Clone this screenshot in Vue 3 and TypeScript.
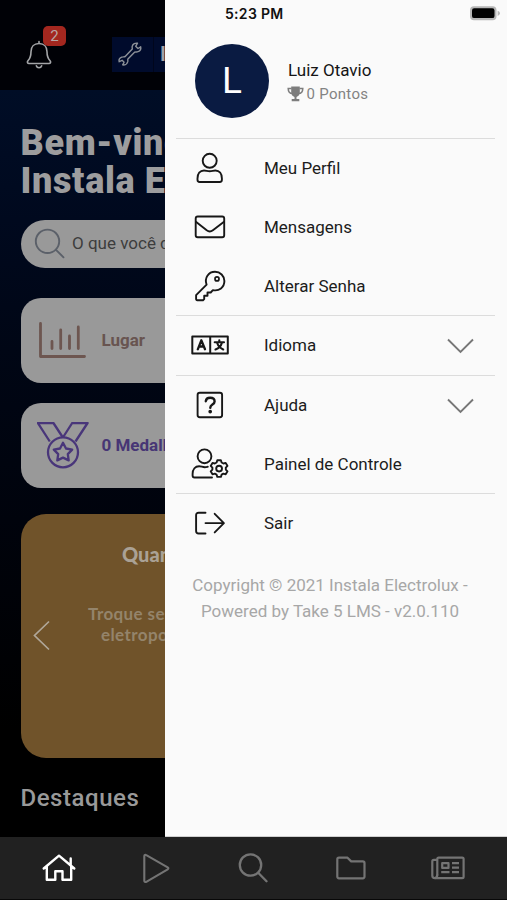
<script setup lang="ts">
interface MenuItem {
  id: string
  label: string
  expandable?: boolean
}

const groups: MenuItem[][] = [
  [
    { id: 'profile', label: 'Meu Perfil' },
    { id: 'messages', label: 'Mensagens' },
    { id: 'password', label: 'Alterar Senha' },
  ],
  [{ id: 'language', label: 'Idioma', expandable: true }],
  [
    { id: 'help', label: 'Ajuda', expandable: true },
    { id: 'admin', label: 'Painel de Controle' },
  ],
  [{ id: 'logout', label: 'Sair' }],
]
</script>

<template>
  <div class="app">
    <div class="content">
      <main class="home">
        <header class="topbar">
          <div class="bell">
            <svg width="28" height="30" viewBox="0 0 28 30" fill="none" stroke="#a3a5a8" stroke-width="1.6" stroke-linejoin="round" stroke-linecap="round">
              <path d="M14 2.500v2M14 4.500c-5 0-8 3.500-8 8.200 0 6-1.500 7.300-3.200 9.300-.9 1.200-.3 2.500 1.200 2.500h20c1.500 0 2.100-1.300 1.200-2.500-1.700-2-3.200-3.300-3.200-9.300 0-4.700-3-8.200-8-8.200z" />
              <path d="M11.300 26.800c.5 1.500 1.400 2 2.700 2s2.200-.5 2.700-2" />
            </svg>
            <span class="badge">2</span>
          </div>
          <div class="brand">
            <div class="brand-icon">
              <svg width="26" height="26" viewBox="0 0 26 26" fill="none" stroke="#8c9198" stroke-width="1.400" stroke-linejoin="round">
                <path d="M20.500 2.200c-2-.5-4.800.8-5.300 3.200-.2 1 .1 1.800.1 2.500L8.200 15.500c-1 .5-2.300.2-3.500.7-2 .8-3 2.800-2.500 4.500l2.900-1.400 2 1.900-1.400 2.700c2 .5 4.300-.7 5-3 .3-1.200-.1-2.100.2-2.900l6.900-6.900c.9-.4 2 .1 3.200-.4 2-.8 3.100-3 2.700-4.900l-2.700 1.700-2.300-2.200z" />
              </svg>
            </div>
            <div class="brand-name">Instala</div>
          </div>
        </header>

        <div class="hero">
          <h1>Bem-vindo<br />Instala Electrolux</h1>

          <div class="search">
            <svg width="32" height="32" viewBox="0 0 32 32" fill="none" stroke="#5b6069" stroke-width="1.900" stroke-linecap="round">
              <circle cx="13.500" cy="13.300" r="11.700" />
              <path d="M22 21.800l7.500 7.500" />
            </svg>
            <span>O que você deseja?</span>
          </div>

          <section class="card rank">
            <svg width="52" height="40" viewBox="0 0 52 40" fill="none" stroke="#6d5650" stroke-width="2.800" stroke-linecap="round" stroke-linejoin="round">
              <path d="M4.500 2.500v33h44M16 20.500v7M24.700 9V27.500M33.500 15V27.500M42.300 6V27.500" />
            </svg>
            <span>Lugar</span>
          </section>

          <section class="card medals">
            <svg width="52" height="48" viewBox="0 0 52 48" fill="none" stroke="#49367a" stroke-width="2.300" stroke-linejoin="round">
              <path d="M12.800 19.500L.9 1h15.500l9.500 14.500M38.500 19.500L50.600 1H35.200L25.900 15.500" />
              <circle cx="26" cy="30.300" r="15" />
              <path d="M26 20.800l3 5.700 6.200 1.100-4.400 4.500.9 6.300-5.700-2.800-5.700 2.800.9-6.300-4.400-4.500 6.200-1.100z" />
            </svg>
            <span>0 Medalhas</span>
          </section>

          <section class="banner">
            <svg width="18" height="32" viewBox="0 0 18 32" fill="none" stroke="#b0a799" stroke-width="1.700">
              <path d="M16 1.500L1.500 15.500 16 29.500" />
            </svg>
            <div class="banner-text">
              <strong>Quanto</strong>
              <p>Troque seus<br /><span>eletropontos</span></p>
            </div>
          </section>

          <h2>Destaques</h2>
        </div>
      </main>

      <aside class="drawer">
        <div class="status">
          <span>5:23 PM</span>
          <svg width="32" height="16" viewBox="0 0 32 16">
            <rect x="1" y="1.200" width="26.500" height="14" rx="4" fill="#b6b6b6" />
            <path d="M28.600 5.700q2.400.8 2.400 2.600t-2.400 2.600z" fill="#b6b6b6" />
            <rect x="3" y="3.300" width="22.500" height="9.800" rx="2.200" fill="#000" />
          </svg>
        </div>

        <div class="user">
          <div class="avatar">L</div>
          <div class="identity">
            <div class="name">Luiz Otavio</div>
            <div class="points">
              <svg width="17" height="16" viewBox="0 0 17 16">
                <path d="M4.200.5h8.600v5.800c0 2.600-1.700 4.200-3.300 4.700v2h2.800v2.300H4.700V13h2.800v-2C5.900 10.500 4.200 8.900 4.200 6.300z" fill="#7d7d7d" />
                <path d="M4.500 2.500H1.200c0 3 1.500 5 4.300 5M12.500 2.500h3.300c0 3-1.500 5-4.300 5" fill="none" stroke="#7d7d7d" stroke-width="1.500" />
              </svg>
              <span>0 Pontos</span>
            </div>
          </div>
        </div>

        <nav class="menu">
          <ul v-for="(group, index) in groups" :key="index">
            <li v-for="item in group" :key="item.id">
              <svg class="icon" width="40" height="34" viewBox="0 0 40 34" fill="none" stroke="#171717" stroke-width="1.900" stroke-linecap="round" stroke-linejoin="round">
                <g v-if="item.id === 'profile'">
                  <circle cx="19.700" cy="9.800" r="7" />
                  <path d="M7.500 27.500c0-4.800 2.500-8 6.500-8 2 0 3.400.8 5.700.8s3.700-.8 5.700-.8c4 0 6.500 3.200 6.500 8v1.300c0 1.300-.8 2.200-2.100 2.200H9.600c-1.300 0-2.100-.9-2.100-2.200z" />
                </g>
                <g v-else-if="item.id === 'messages'">
                  <rect x="5.700" y="6.500" width="28.500" height="20.800" rx="2" />
                  <path d="M6.200 12l10.500 8.300c2 1.500 4.200 1.500 6.200 0L33.700 12" />
                </g>
                <g v-else-if="item.id === 'password'">
                  <path d="M16.600 15.700C14.100 8.800 18.500 2.800 25 2.800c5.200 0 9.400 4.100 9.400 9.300 0 6.200-5.300 10.400-11.500 9l-2.200 2.400h-3.200v3.300h-3.300v3.300l-1.200 1.100H7.200c-.7 0-1.100-.4-1.100-1.100v-3.900z" />
                  <circle cx="27" cy="9.900" r="2" stroke-width="1.700" />
                </g>
                <g v-else-if="item.id === 'language'">
                  <path d="M2.300 8.500h35.500v17H2.300zM20.200 8.500v17" stroke-width="2" />
                  <path d="M7.800 21.300l3.500-9 3.700 9M9 18.500h4.700" stroke-width="2.300" />
                  <path d="M24.700 14.200h9.300M29.300 12.200v1.500M31.800 15c-.8 3.200-3.200 5.300-6.300 6.500M27.200 15c1 3 3.300 5.300 6 6.500" stroke-width="2.100" />
                </g>
                <g v-else-if="item.id === 'help'">
                  <rect x="7.600" y="4.800" width="24.500" height="24.500" rx="2.200" />
                  <path d="M15.800 13.200c.3-2.200 2-3.400 4.300-3.400 2.600 0 4.500 1.400 4.500 3.600 0 3.400-4.300 3-4.300 6.300" stroke-width="2.400" />
                  <circle cx="20.200" cy="23.600" r=".9" fill="#171717" />
                </g>
                <g v-else-if="item.id === 'admin'">
                  <circle cx="14.500" cy="9.300" r="6.900" />
                  <path d="M22 30.500H4.500c-1.200 0-1.900-.8-1.900-2V27c0-4.900 2.700-7.800 6.500-7.800 2 0 3.500 1 5.700 1 1.300 0 2-.2 3-.4" />
                  <path d="M27.300 13.300h3.600l.7 2.200 1.800 1 2.300-.6 1.800 3-1.700 1.700v2l1.700 1.700-1.800 3-2.300-.6-1.800 1-.7 2.200h-3.600l-.7-2.200-1.800-1-2.300.6-1.800-3 1.700-1.700v-2l-1.700-1.700 1.800-3 2.300.6 1.800-1z" />
                  <circle cx="29.100" cy="21.600" r="2.900" />
                </g>
                <g v-else>
                  <path d="M15.500 6.700H8.600c-1.600 0-2.500.9-2.500 2.500V25c0 1.600.9 2.500 2.500 2.500h6.900M15.500 17.100h18.300M24.700 7.800l9.200 9.300-9.200 9.300" />
                </g>
              </svg>
              <span class="label">{{ item.label }}</span>
              <svg v-if="item.expandable" class="chevron" width="28" height="16" viewBox="0 0 28 16" fill="none" stroke="#777" stroke-width="1.900">
                <path d="M2 1.500L14.500 14 27 1.500" />
              </svg>
            </li>
          </ul>
        </nav>

        <p class="copyright">Copyright © 2021 Instala Electrolux -<br />Powered by Take 5 LMS - v2.0.110</p>
      </aside>
    </div>

    <nav class="tabs">
      <a class="active">
        <svg width="34" height="28" viewBox="0 0 34 28" fill="none" stroke="#fff" stroke-width="2.400" stroke-linejoin="round" stroke-linecap="round">
          <path d="M1.700 14.500L17 1.700l15.300 12.800M4.800 12.500v13.300h8.500v-8.500h7.200v8.500h8.700V12.500M28.700 11V4.500" />
        </svg>
      </a>
      <a>
        <svg width="34" height="34" viewBox="0 0 34 34" fill="none" stroke="#747474" stroke-width="2.100" stroke-linejoin="round">
          <path d="M5.300 5.200v24.500c0 1.200 1 1.700 2 1.100l21.400-12.500c.9-.5.9-1.500 0-2L7.300 4.100c-1-.6-2-.1-2 1.100z" />
        </svg>
      </a>
      <a>
        <svg width="30" height="30" viewBox="0 0 30 30" fill="none" stroke="#747474" stroke-width="2.300" stroke-linecap="round">
          <circle cx="12.500" cy="12" r="10.700" />
          <path d="M20.200 19.700l8.300 8.500" />
        </svg>
      </a>
      <a>
        <svg width="30" height="24" viewBox="0 0 30 24" fill="none" stroke="#747474" stroke-width="2.200" stroke-linejoin="round">
          <path d="M3 1.700h8.500l3.700 3.700h11.600c1.200 0 1.700.6 1.700 1.700v13.500c0 1.200-.6 1.700-1.700 1.700H3c-1.200 0-1.700-.6-1.700-1.700V3.400c0-1.200.6-1.700 1.700-1.700z" />
        </svg>
      </a>
      <a>
        <svg width="34" height="24" viewBox="0 0 34 24" fill="none" stroke="#747474" stroke-width="2.200" stroke-linejoin="round">
          <path d="M6.300 19.500V3c0-.9.500-1.400 1.400-1.400h23.500c.9 0 1.400.5 1.400 1.400v17.700c0 .9-.5 1.400-1.400 1.400H4c-1.800 0-2.700-1-2.700-2.700V5.300c0-1 .5-1.500 1.500-1.500h3.500" />
          <path d="M6.300 18.500q0 3.300-2.500 3.600" />
          <path d="M11.200 7.200h6.300v4.700h-6.300zM21 7.200h7M21 11.700h7M21 16.200h7M10.200 16.200h8.300" />
        </svg>
      </a>
    </nav>
  </div>
</template>

<style>
body {
  margin: 0;
  background: #000;
}
</style>

<style scoped>
.app {
  width: 507px;
  height: 900px;
  box-sizing: border-box;
  border-bottom: 1px solid #080808;
  display: flex;
  flex-direction: column;
  overflow: hidden;
  font-family: Roboto, 'Liberation Sans', sans-serif;
}

svg {
  display: block;
  flex: none;
}

.content {
  flex: 1;
  min-height: 0;
  display: flex;
}

.home {
  width: 165px;
  overflow: hidden;
  white-space: nowrap;
  background: #000;
}

.topbar {
  height: 90px;
  box-sizing: border-box;
  display: flex;
  align-items: flex-start;
  padding: 37px 0 0 25px;
  background: #000106;
}

.bell {
  position: relative;
  width: 87px;
  padding-top: 2px;
  flex: none;
}

.badge {
  position: absolute;
  left: 18px;
  top: -11px;
  width: 23px;
  height: 20px;
  border-radius: 5px;
  background: #a3271f;
  color: #b9a6a5;
  font-size: 15px;
  line-height: 21px;
  text-align: center;
}

.brand {
  display: flex;
  flex: none;
  height: 35px;
  background: #000b2c;
}

.brand-icon {
  width: 42px;
  box-sizing: border-box;
  padding: 4px 0 0 5px;
  border-right: 1px solid #00061c;
}

.brand-name {
  padding-left: 6px;
  color: #a0a2a8;
  font-size: 20px;
  line-height: 34px;
  font-weight: 700;
}

.hero {
  height: 747px;
  box-sizing: border-box;
  padding: 34px 0 0 20.500px;
  background: linear-gradient(#000d26 0, #00091e 130px, #000615 260px, #00030c 430px, #000 640px);
}

h1 {
  margin: 0 0 20px;
  color: #9d9d9e;
  font-size: 36px;
  line-height: 38px;
  font-weight: 900;
  letter-spacing: 0.650px;
}

.search {
  width: 467px;
  height: 48px;
  border-radius: 24px;
  background: #999;
  display: flex;
  align-items: center;
  gap: 6px;
  padding-left: 13.500px;
  color: #3d3d3d;
  font-size: 17px;
}

.search span {
  margin-top: -2px;
}

.card {
  width: 467px;
  height: 85px;
  border-radius: 20px;
  background: #999;
  display: flex;
  align-items: center;
  font-size: 17px;
  font-weight: 700;
}

.card span {
  margin-top: -1px;
}

.rank {
  margin-top: 30px;
  padding-left: 15.500px;
  gap: 13.500px;
  color: #685450;
}

.medals {
  margin-top: 20px;
  padding-left: 16.500px;
  gap: 12.500px;
  color: #473675;
}

.banner {
  width: 467px;
  height: 244px;
  margin-top: 26px;
  border-radius: 25px;
  background: #70532a;
  display: flex;
  align-items: center;
  padding-left: 12px;
}

.banner-text {
  align-self: flex-start;
  padding: 28px 0 0 37.500px;
  font-family: Lato, 'Liberation Sans', sans-serif;
  color: #aaa195;
}

.banner-text strong {
  display: block;
  padding-left: 34px;
  font-size: 20px;
  line-height: 24px;
  font-weight: 900;
}

.banner-text p {
  margin: 38px 0 0;
  font-size: 17px;
  line-height: 20.500px;
  font-weight: 700;
  letter-spacing: 0.4px;
  color: #94846b;
}

.banner-text p span {
  padding-left: 13px;
}

h2 {
  margin: 25px 0 0;
  color: #999;
  font-size: 24px;
  line-height: 30px;
  font-weight: 500;
  letter-spacing: 0.550px;
}

.drawer {
  flex: 1;
  box-sizing: border-box;
  border-bottom: 1px solid #d0d0d0;
  background: #fafafa;
}

.status {
  height: 28px;
  display: flex;
  align-items: center;
  justify-content: space-between;
  padding: 0 6px 1px 60px;
  box-sizing: border-box;
  font-family: Inter, 'Liberation Sans', sans-serif;
  font-size: 14px;
  font-weight: 600;
  letter-spacing: 0.3px;
  color: #111;
}

.status svg {
  margin-top: -1px;
}

.user {
  height: 110px;
  box-sizing: border-box;
  display: flex;
  padding: 16px 0 0 30px;
}

.avatar {
  width: 74px;
  height: 74px;
  border-radius: 50%;
  background: #0a1b42;
  color: #fff;
  font-size: 37px;
  line-height: 73px;
  text-align: center;
}

.identity {
  padding: 15.500px 0 0 18px;
}

.name {
  padding-left: 1px;
  font-size: 17px;
  line-height: 20px;
  color: #151515;
}

.points {
  display: flex;
  align-items: center;
  gap: 2.500px;
  margin-top: 4px;
  font-size: 15px;
  line-height: 20px;
  letter-spacing: 0.3px;
  color: #838383;
}

.menu {
  margin: 0 12px 0 11px;
}

ul {
  list-style: none;
  margin: 0;
  padding: 0;
  border-top: 1.500px solid #dcdcdc;
}

li {
  height: 58.700px;
  display: flex;
  align-items: center;
}

.icon {
  margin: 0 34px 0 14px;
}

.label {
  flex: 1;
  font-size: 17px;
  color: #1c1c1c;
}

.chevron {
  margin: 2px 21px 0 0;
}

.copyright {
  margin: 19px 23px 0 11px;
  text-align: center;
  font-size: 17px;
  line-height: 26px;
  color: #a7a7a7;
}

.tabs {
  height: 62px;
  flex: none;
  box-sizing: border-box;
  padding: 0 10px;
  display: grid;
  grid-template-columns: repeat(5, 1fr);
  place-items: center;
  background: #212121;
}
</style>
